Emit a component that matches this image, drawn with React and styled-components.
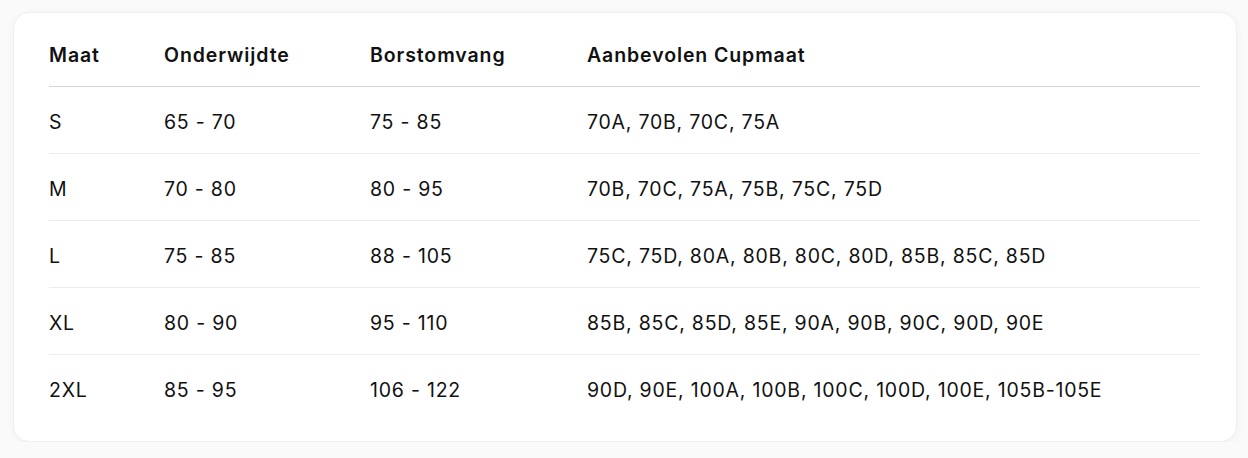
import React from 'react';
import styled, { createGlobalStyle } from 'styled-components';

const rows = [
  { size: 'S', under: '65 - 70', bust: '75 - 85', cups: '70A, 70B, 70C, 75A' },
  { size: 'M', under: '70 - 80', bust: '80 - 95', cups: '70B, 70C, 75A, 75B, 75C, 75D' },
  { size: 'L', under: '75 - 85', bust: '88 - 105', cups: '75C, 75D, 80A, 80B, 80C, 80D, 85B, 85C, 85D' },
  { size: 'XL', under: '80 - 90', bust: '95 - 110', cups: '85B, 85C, 85D, 85E, 90A, 90B, 90C, 90D, 90E' },
  { size: '2XL', under: '85 - 95', bust: '106 - 122', cups: '90D, 90E, 100A, 100B, 100C, 100D, 100E, 105B-105E' },
];

const App = () => {
  return (
    <>
      <GlobalStyle />
      <Card>
        <Table>
          <colgroup>
            <col style={{ width: 115 }} />
            <col style={{ width: 206 }} />
            <col style={{ width: 217 }} />
            <col />
          </colgroup>
          <thead>
            <tr>
              <Th>Maat</Th>
              <Th>Onderwijdte</Th>
              <Th>Borstomvang</Th>
              <Th>Aanbevolen Cupmaat</Th>
            </tr>
          </thead>
          <tbody>
            {rows.map((r) => (
              <Row key={r.size}>
                <Td>{r.size}</Td>
                <Td>{r.under}</Td>
                <Td>{r.bust}</Td>
                <Td>{r.cups}</Td>
              </Row>
            ))}
          </tbody>
        </Table>
      </Card>
    </>
  );
};

export default App;

const GlobalStyle = createGlobalStyle`
  html, body {
    margin: 0;
    padding: 0;
    background: #fafafa;
  }
  body {
    font-family: Inter, "Noto Sans", Arial, sans-serif;
    color: #111;
    -webkit-font-smoothing: antialiased;
  }
`;

const Card = styled.div`
  box-sizing: border-box;
  margin: 12px 11px 0 13px;
  height: 430px;
  padding: 7px 36px 19px 35px;
  background: #fff;
  border: 1px solid #efefef;
  border-radius: 16px;
  box-shadow: 0 2px 8px rgba(0, 0, 0, 0.04);
`;

const Table = styled.table`
  width: 100%;
  border-collapse: collapse;
  table-layout: fixed;
`;

const Th = styled.th`
  text-align: left;
  font-size: 19.5px;
  font-weight: 600;
  line-height: 22px;
  padding: 24px 0 20px;
  color: #111;
  border-bottom: 1px solid #d6d6d6;
  letter-spacing: 0.9px;
  white-space: nowrap;
`;

const Row = styled.tr`
  & + & td {
    border-top: 1px solid #ececec;
  }
`;

const Td = styled.td`
  font-size: 19.5px;
  font-weight: 400;
  line-height: 22px;
  padding: 24px 0 20px;
  color: #111;
  letter-spacing: 0.78px;
  white-space: nowrap;
`;
